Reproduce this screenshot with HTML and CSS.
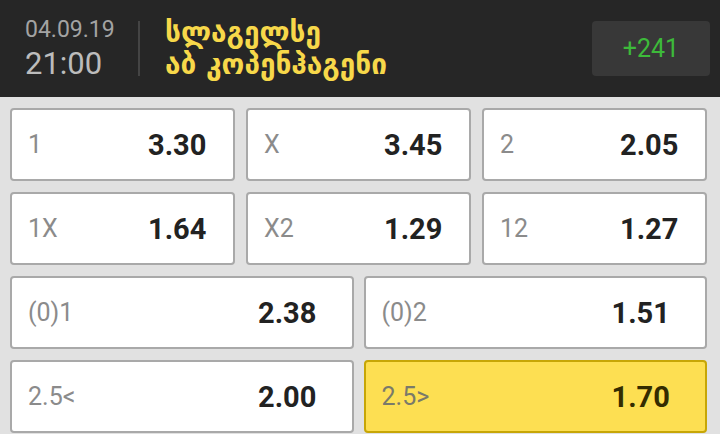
FILE: index.html
```html
<!DOCTYPE html>
<html lang="ka">
<head>
<meta charset="utf-8">
<link rel="stylesheet" href="styles.css">
</head>
<body>
<header class="top">
  <div class="when">
    <div class="date">04.09.19</div>
    <div class="time">21:00</div>
  </div>
  <div class="sep"></div>
  <div class="teams">
    <div class="team">სლაგელსე</div>
    <div class="team">აბ კოპენჰაგენი</div>
  </div>
  <button class="more">+241</button>
</header>
<main class="board">
  <div class="row three">
    <div class="odd"><span class="lbl">1</span><span class="val">3.30</span></div>
    <div class="odd"><span class="lbl">X</span><span class="val">3.45</span></div>
    <div class="odd"><span class="lbl">2</span><span class="val">2.05</span></div>
  </div>
  <div class="row three">
    <div class="odd"><span class="lbl">1X</span><span class="val">1.64</span></div>
    <div class="odd"><span class="lbl">X2</span><span class="val">1.29</span></div>
    <div class="odd"><span class="lbl">12</span><span class="val">1.27</span></div>
  </div>
  <div class="row two">
    <div class="odd"><span class="lbl">(0)1</span><span class="val">2.38</span></div>
    <div class="odd"><span class="lbl">(0)2</span><span class="val">1.51</span></div>
  </div>
  <div class="row two">
    <div class="odd"><span class="lbl">2.5&lt;</span><span class="val">2.00</span></div>
    <div class="odd selected"><span class="lbl">2.5&gt;</span><span class="val">1.70</span></div>
  </div>
</main>
</body>
</html>
```
FILE: styles.css
```css
html, body {
  margin: 0;
  padding: 0;
}
body {
  width: 720px;
  height: 434px;
  overflow: hidden;
  background: #e1e1e1;
  font-family: Roboto, "Liberation Sans", sans-serif;
}
.top {
  height: 97px;
  background: #262626;
  display: flex;
  align-items: center;
  box-sizing: border-box;
}
.when {
  width: 138px;
  padding-left: 25px;
  box-sizing: border-box;
  display: flex;
  flex-direction: column;
}
.date {
  font-size: 23px;
  line-height: 26px;
  color: #a3a3a3;
}
.time {
  font-size: 31px;
  line-height: 34px;
  margin-top: 4px;
  color: #bcbcbc;
}
.sep {
  width: 2px;
  height: 55px;
  background: #444444;
}
.teams {
  margin-left: 25px;
  display: flex;
  flex-direction: column;
}
.team {
  font-family: "DejaVu Sans", sans-serif;
  font-size: 28px;
  font-weight: 700;
  line-height: 32px;
  color: #f7d84a;
}
.more {
  margin-left: auto;
  margin-right: 10px;
  width: 118px;
  height: 55px;
  border: none;
  border-radius: 4px;
  background: #383838;
  color: #3dba3a;
  font-family: Roboto, "Liberation Sans", sans-serif;
  font-size: 25px;
  padding: 0;
}
.board {
  padding: 11px 13px 0 10px;
  display: flex;
  flex-direction: column;
  gap: 11px;
}
.row {
  display: grid;
  height: 73px;
}
.row.three {
  grid-template-columns: repeat(3, 1fr);
  column-gap: 11px;
}
.row.two {
  grid-template-columns: repeat(2, 1fr);
  column-gap: 10px;
}
.odd {
  background: #ffffff;
  border: 2px solid #a9a9a9;
  border-radius: 4px;
  display: flex;
  align-items: center;
  padding-left: 16px;
}
.lbl {
  font-size: 25px;
  color: #8b8b8b;
}
.three .lbl {
  width: 120px;
}
.two .lbl {
  width: 230px;
}
.val {
  font-size: 29px;
  font-weight: 700;
  color: #222222;
}
.odd.selected {
  background: #fddf52;
  border-color: #c7a606;
}
.selected .lbl {
  color: #7a7a6a;
}
.selected .val {
  color: #342c00;
}
```
